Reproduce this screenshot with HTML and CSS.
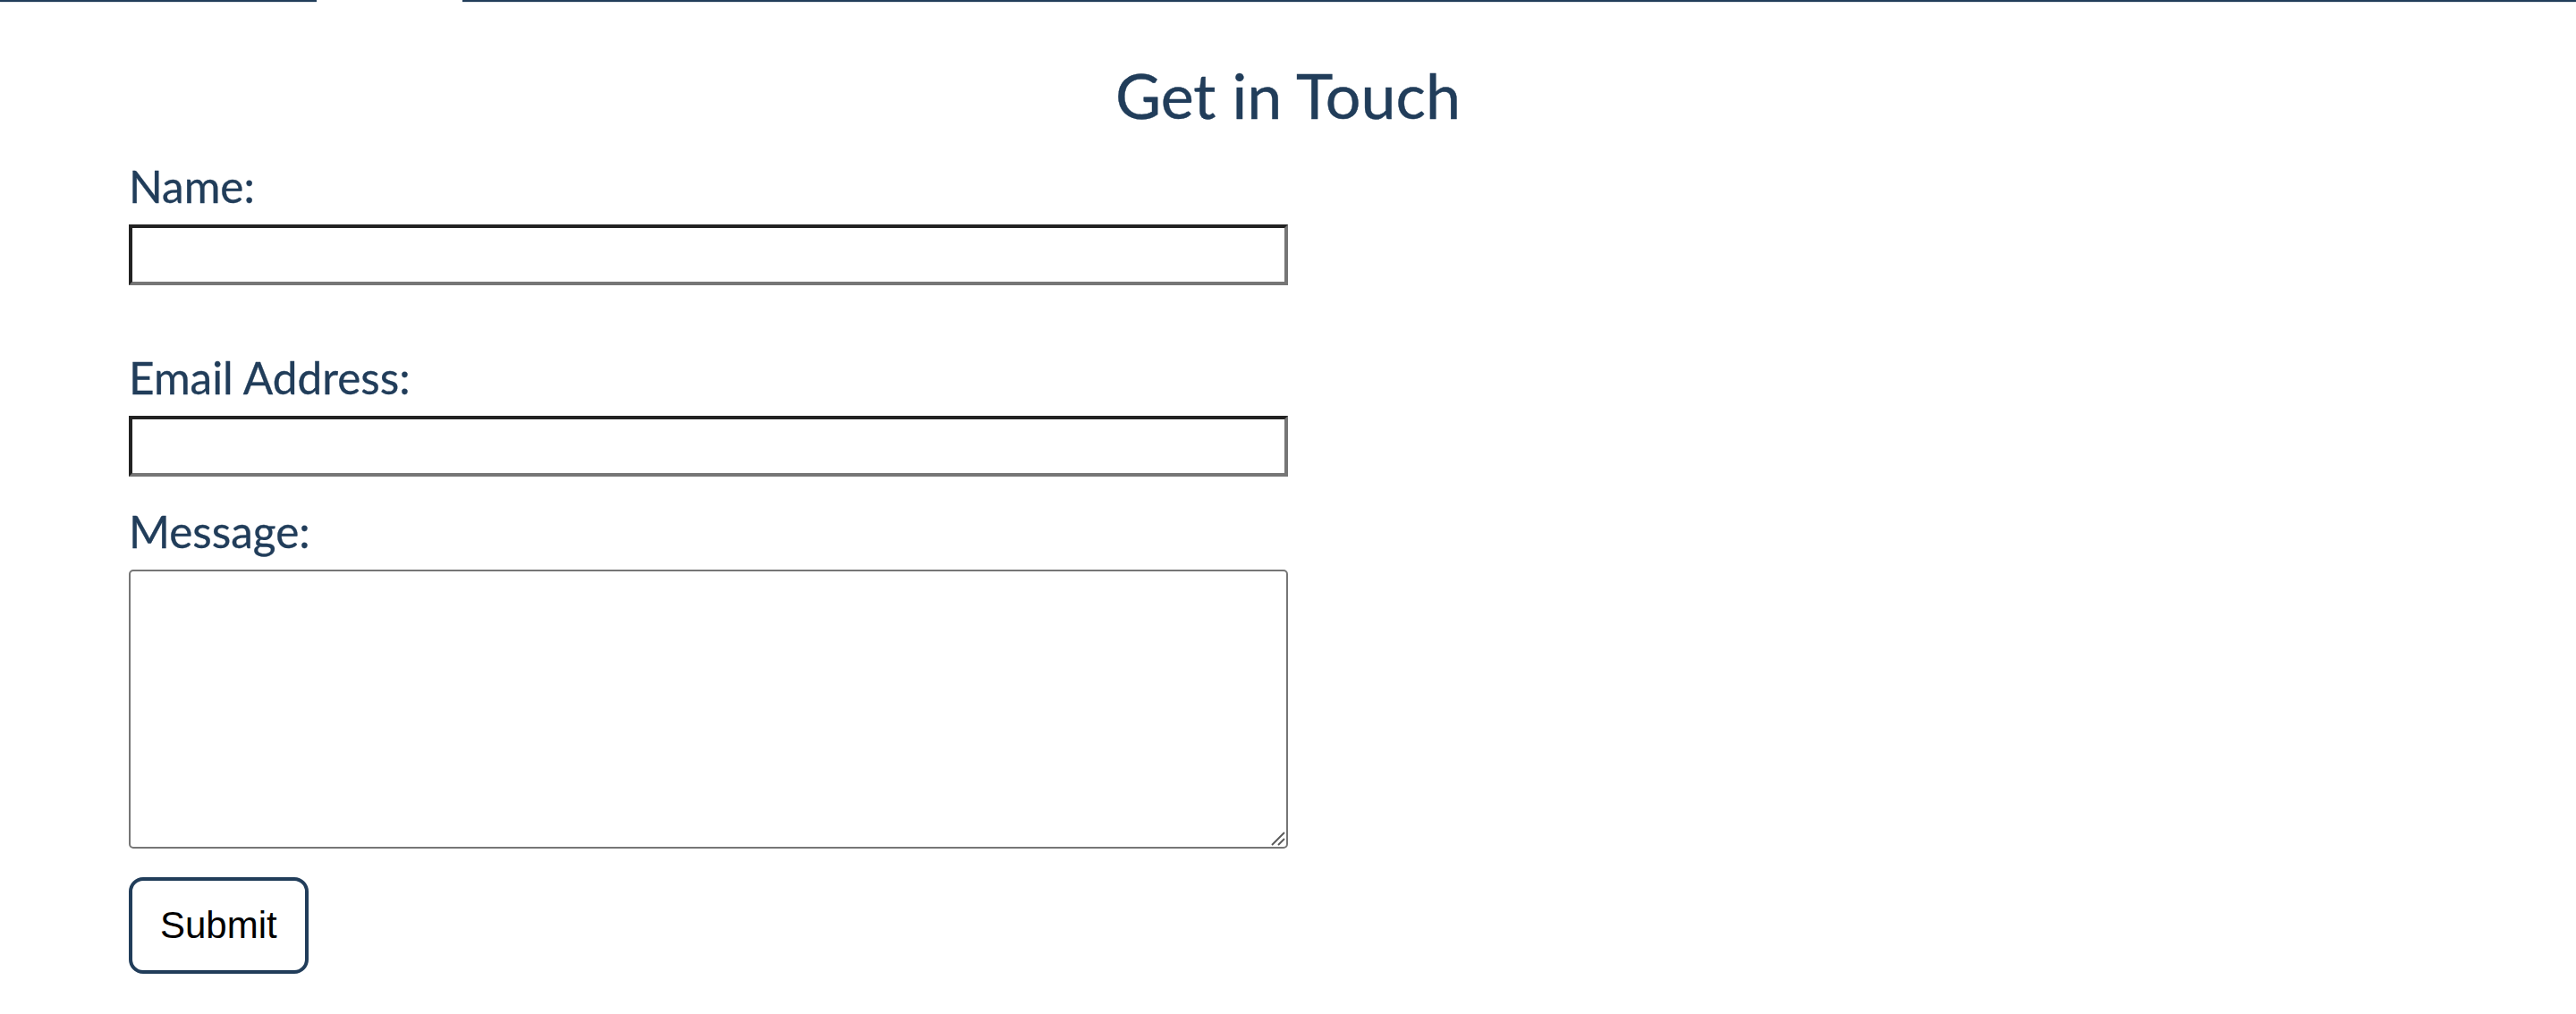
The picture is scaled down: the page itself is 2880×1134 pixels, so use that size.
FILE: index.html
```html
<!DOCTYPE html>
<html lang="en">
<head>
<meta charset="utf-8">
<title>Get in Touch</title>
<link rel="stylesheet" href="styles.css">
</head>
<body>
<div class="topbar">
  <div class="topbar-seg topbar-left"></div>
  <div class="topbar-gap"></div>
  <div class="topbar-seg topbar-right"></div>
</div>
<main class="contact">
  <h1 class="contact-title">Get in Touch</h1>
  <form class="contact-form">
    <div class="field field-first">
      <label class="field-label" for="name">Name:</label>
      <input class="field-input" type="text" id="name" name="name">
    </div>
    <div class="field">
      <label class="field-label" for="email">Email Address:</label>
      <input class="field-input" type="email" id="email" name="email">
    </div>
    <div class="field">
      <label class="field-label" for="message">Message:</label>
      <div class="textarea-wrap">
        <textarea class="field-textarea" id="message" name="message"></textarea>
        <svg class="grip" width="16" height="16" viewBox="0 0 16 16" aria-hidden="true">
          <line x1="1" y1="15" x2="15" y2="1" stroke="#5a5a5a" stroke-width="2"/>
          <line x1="8" y1="15" x2="15" y2="8" stroke="#5a5a5a" stroke-width="2"/>
        </svg>
      </div>
    </div>
    <div class="actions">
      <button class="submit-btn" type="submit">Submit</button>
    </div>
  </form>
</main>
</body>
</html>
```
FILE: styles.css
```css
html, body {
  margin: 0;
  padding: 0;
  background: #ffffff;
}

body {
  font-family: Lato, "Open Sans", "Liberation Sans", sans-serif;
  color: #213d5a;
}

.topbar {
  display: flex;
  height: 3px;
}

.topbar-seg {
  height: 2px;
  background: #213d5a;
  box-shadow: 0 1px 1px rgba(33, 61, 90, 0.15);
}

.topbar-left {
  width: 354px;
}

.topbar-gap {
  width: 163px;
}

.topbar-right {
  flex: 1;
}

.contact {
  padding: 0 144px;
}

.contact-title {
  margin: 60px 0 0;
  font-size: 70px;
  line-height: 86px;
  font-weight: 400;
  text-align: center;
  color: #213d5a;
  -webkit-text-stroke: 0.4px #213d5a;
}

.contact-form {
  width: 50%;
  margin-top: 30px;
  display: flex;
  flex-direction: column;
  gap: 32px;
}

.field {
  display: flex;
  flex-direction: column;
  gap: 14px;
}

.field-first {
  margin-bottom: 42px;
}

.field-label {
  font-size: 49.5px;
  line-height: 58px;
  color: #213d5a;
  -webkit-text-stroke: 0.3px #213d5a;
}

.field-input {
  box-sizing: border-box;
  width: 100%;
  height: 68px;
  margin: 0;
  padding: 0 8px;
  border-width: 4px;
  border-style: solid;
  border-color: #222222 #767676 #767676 #222222;
  background: #ffffff;
  font-family: "Liberation Sans", Arial, sans-serif;
  font-size: 32px;
  outline: none;
}

.textarea-wrap {
  position: relative;
  width: 100%;
  height: 312px;
}

.field-textarea {
  box-sizing: border-box;
  display: block;
  width: 100%;
  height: 312px;
  margin: 0;
  border: 2px solid #767676;
  border-radius: 5px;
  background: #ffffff;
  resize: none;
  font-family: "Liberation Mono", monospace;
  font-size: 26px;
  outline: none;
}

.grip {
  position: absolute;
  right: 3px;
  bottom: 3px;
}

.actions {
  display: flex;
}

.submit-btn {
  box-sizing: border-box;
  height: 108px;
  padding: 0 31px;
  border: 4px solid #213d5a;
  border-radius: 16px;
  background: #ffffff;
  color: #000000;
  font-family: "Liberation Sans", Arial, Helvetica, sans-serif;
  font-size: 42px;
  cursor: pointer;
}
```
